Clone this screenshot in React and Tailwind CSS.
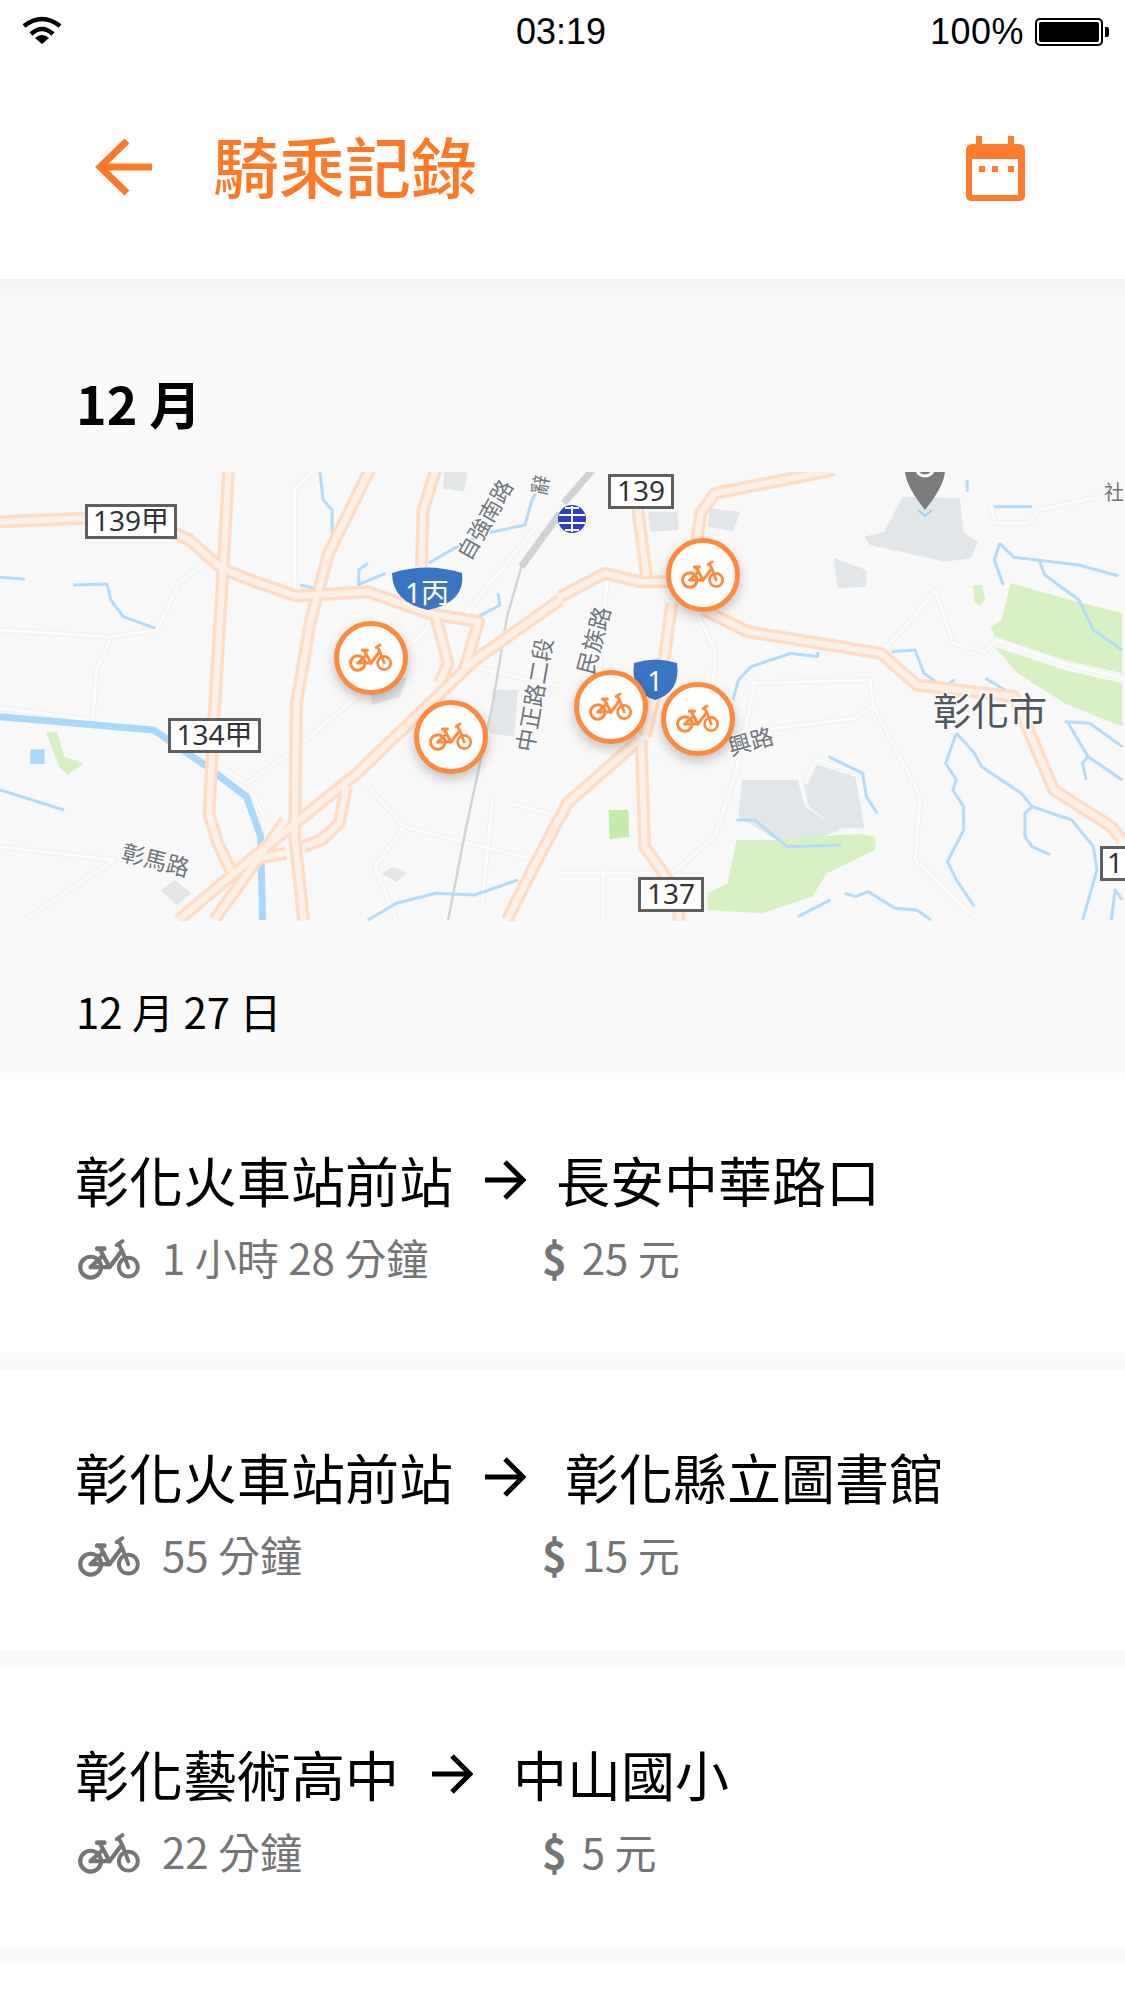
import React from "react";

const cjk = "font-['Noto_Sans_CJK_TC','Noto_Sans',sans-serif]";

function BikeIcon({ className, color }) {
  return (
    <svg className={className} viewBox="20 40 200 132" fill="none" stroke={color} strokeLinecap="round" strokeLinejoin="round">
      <circle cx="62" cy="128" r="32" strokeWidth="13" />
      <circle cx="178" cy="128" r="29" strokeWidth="12" />
      <path d="M62 128H120L158 78" strokeWidth="13" />
      <path d="M62 128L100 92" strokeWidth="13" />
      <path d="M92 76L120 128" strokeWidth="13" />
      <path d="M82 71H104" strokeWidth="14" />
      <path d="M142 60L160 48M150 60L160 80L178 128" strokeWidth="12" />
    </svg>
  );
}

function ArrowRight() {
  return (
    <svg className="w-[42px] h-[40px] shrink-0" viewBox="0 0 42 40" fill="none" stroke="#000" strokeWidth="5">
      <path d="M1 20H38" />
      <path d="M21 2L39 20L21 38" />
    </svg>
  );
}

const roadsZ2 = [
  "M0 155L240 145L490 190L530 210L620 295L700 330L830 378L1030 365L1200 430L1340 455L1300 600",
  "M640 0L625 290L600 730L585 1030L610 1120L650 1210",
  "M1220 0L1185 120L1180 290",
  "M1568 390L1330 570L1000 910L850 1040L700 1170L500 1350",
  "M1220 440L1255 580L1230 640",
  "M970 950L950 1060L900 1110L850 1130",
  "M800 1050L720 1170L600 1350",
  "M700 1170L800 1150",
  "M1568 1040L1500 1180L1420 1350",
];
const highwayZ2 = ["M1035 0L920 250L870 450L830 700L825 1100L850 1350"];
const roadsZ3 = [
  "M215 110L240 320",
  "M0 380L125 310L220 335L300 335",
  "M760 0L430 70L390 130L380 210",
  "M310 400L290 560L235 800",
  "M400 420L520 485L890 550L990 645L1260 680L1370 960L1530 1070L1560 1110",
  "M225 810L235 1130L300 1230",
  "M330 1320L330 1352",
  "M220 810L20 1000L0 1045",
];
const minorZ2 = [
  "M0 715L260 750L270 600L310 500L440 480L500 340L600 260",
  "M825 360V60L880 0",
  "M600 880L690 940L800 860L1000 680L1200 470",
  "M1320 590L1568 650",
  "M1000 910L1130 1070L1500 1170",
  "M1130 1070L1050 1190L1110 1350",
  "M1380 980L1350 1300",
  "M1430 1000L1568 1040",
  "M0 1130L320 1170L70 1350",
  "M700 960L740 1040L730 1100",
  "M1290 450L1500 170",
  "M0 480L300 500",
];
const minorZ3 = [
  "M500 600L540 640L860 630L870 710L1000 980L985 1170L1160 1352",
  "M870 710L820 745L560 780",
  "M540 640L490 900L430 1100L300 1220",
  "M890 550L950 480L1040 360L1090 520L1180 545L1210 510L1400 580L1560 625",
  "M680 940L710 870L840 910",
  "M1190 90L1210 160L1300 160L1330 120L1500 80",
  "M130 330L110 600M380 430L430 540L420 800",
  "M120 1200V1352M0 1210H300",
];
const waterZ2 = [
  "M205 345L300 342L310 390L345 440L435 475",
  "M0 322L70 328",
  "M895 0L905 90L930 120L930 190",
  "M1000 345L1080 310M1005 340V300L1030 280",
  "M1200 280L1280 230L1360 190L1470 165L1490 90L1510 50",
  "M840 345L880 355",
  "M1030 1350L1110 1300L1220 1270L1330 1275L1450 1230",
  "M1340 440L1400 405L1395 370",
  "M0 960L180 1020",
];
const waterZ3 = [
  "M1220 220L1205 270L1230 345",
  "M1220 220L1260 262L1440 285L1550 318",
  "M1330 270L1345 315L1440 390L1480 480L1560 540",
  "M480 690L495 630L530 590L640 550L715 560V545",
  "M920 545L985 540L1010 610L1060 650L1095 630",
  "M1180 625L1250 670",
  "M1400 755L1470 760L1560 830",
  "M1410 760L1465 860L1560 930",
  "M1465 860L1450 880L1460 930",
  "M1100 790L1150 850L1170 890L1280 970L1310 1010L1420 1050L1480 1130L1490 1200L1450 1350",
  "M1310 1010L1290 1030V1100L1310 1130L1360 1155",
  "M1100 790L1070 880L1100 930L1090 960L1120 1010V1080L1075 1175L1100 1230L1150 1310",
  "M745 860L840 910L850 980L880 1030",
  "M490 1050H540L630 1130L780 1125",
  "M790 1270L820 1280L855 1265L930 1315L990 1320L1030 1350",
  "M660 1340L750 1290",
  "M1530 1350L1540 1260L1560 1290",
  "M1205 110H1310",
  "M1130 30V65",
];
const greenZ3 = [
  "M1250 340L1450 400L1560 430V610L1400 570L1210 510L1195 470L1225 450Z",
  "M1205 530L1400 600L1560 640V770L1400 700L1270 610Z",
  "M1145 345H1170L1180 385L1165 408L1150 395Z",
  "M490 1110H600L700 1100L830 1092L875 1100V1140L740 1210L700 1280L560 1330L410 1320V1270L465 1240Z",
];
const grayZ3 = [
  "M950 80L1110 85L1120 190L1160 215L1140 265L1070 275L860 225L845 200L900 185Z",
  "M760 265L850 300V350L770 355Z",
  "M505 930H660L680 1010L780 1080L700 1110H600L495 1040Z",
  "M700 880L820 920L845 1075H770L690 1010L675 940Z",
  "M415 115L500 125L480 185L410 170Z",
  "M245 125H325L330 180L250 185Z",
];
const grayZ2 = [
  "M1245 0H1310L1300 65L1240 55Z",
  "M1380 660H1450L1440 800L1370 790Z",
  "M1040 650L1140 620L1120 680L1040 705Z",
  "M1070 1210L1100 1190L1140 1210L1110 1235Z",
  "M450 1260L490 1230L535 1270L495 1305Z",
];

function Lines({ items, color, width }) {
  return items.map((d, i) => (
    <path key={i} d={d} fill="none" stroke={color} strokeWidth={width} strokeLinejoin="round" vectorEffect="non-scaling-stroke" />
  ));
}

function Shield({ x, y, w, label, left }) {
  return (
    <g>
      <rect x={x + 1.5} y={y + 1.5} width={w - 3} height="32" fill="#fff" stroke="#5f5f5f" strokeWidth="3" />
      <text x={left ? x + 7 : x + w / 2} y={y + 27} textAnchor={left ? "start" : "middle"} fontSize="28" fill="#333" fontFamily="'Noto Sans','Noto Sans CJK TC',sans-serif">{label}</text>
    </g>
  );
}

function RoadLabel({ x, y, r, size = 22, fill = "#70767c", children }) {
  return (
    <text
      transform={`translate(${x} ${y}) rotate(${r})`}
      fontSize={size}
      fill={fill}
      stroke="#fafafa"
      strokeWidth="3"
      paintOrder="stroke"
      fontFamily="'Noto Sans CJK TC',sans-serif"
    >
      {children}
    </text>
  );
}

function MapArt() {
  return (
    <svg className="block w-full h-full" viewBox="0 2 1125 449" preserveAspectRatio="none">
      <rect width="1125" height="451" fill="#f8f8f8" />
      <g transform="scale(0.3571 0.3333)">
        {grayZ2.map((d, i) => <path key={i} d={d} fill="#e3e6e9" />)}
        <path d="M85 838H125V882H85Z" fill="#a9d9fb" />
        <path d="M128 785H160L180 860L235 880L190 915L165 890Z" fill="#d7f0c4" />
        <Lines items={minorZ2} color="#f2f3f3" width="6" />
        <Lines items={minorZ2} color="#fbfbfb" width="3" />
        <Lines items={waterZ2} color="#b3dcfb" width="3" />
        <Lines items={["M0 740L430 780L580 890L690 980L730 1100L735 1350"]} color="#a8d8fb" width="7" />
        <Lines items={["M1568 130L1460 290L1420 440L1380 700L1340 900L1300 1100L1255 1350"]} color="#d2d5d8" width="2.5" />
        <Lines items={["M1568 130L1460 290"]} color="#cfd3d6" width="7" />
      </g>
      <g transform="translate(560 0) scale(0.3604 0.3333)">
        {grayZ3.map((d, i) => <path key={i} d={d} fill="#e3e6e9" />)}
        {greenZ3.map((d, i) => <path key={i} d={d} fill="#d7f0c4" />)}
        <path d="M135 1020H190L192 1100L138 1108Z" fill="#c6eaa9" />
        <Lines items={minorZ3} color="#f2f3f3" width="6" />
        <Lines items={minorZ3} color="#fbfbfb" width="3" />
        <Lines items={waterZ3} color="#b3dcfb" width="3" />
        <Lines items={["M90 0L10 100"]} color="#cfd3d6" width="7" />
      </g>
      <g transform="scale(0.3571 0.3333)">
        <Lines items={[...roadsZ2, ...highwayZ2]} color="#ffdcc4" width="13" />
        <Lines items={[...roadsZ2, ...highwayZ2]} color="#fff0e6" width="6" />
      </g>
      <g transform="translate(560 0) scale(0.3604 0.3333)">
        <Lines items={roadsZ3} color="#ffdcc4" width="13" />
        <Lines items={roadsZ3} color="#fff0e6" width="6" />
      </g>

      <path d="M392 103Q427 92 462 103Q466 132 428 140Q392 132 392 103Z" fill="#3a75c4" />
      <text x="427" y="133" textAnchor="middle" fontSize="28" fill="#fff" fontFamily="'Noto Sans','Noto Sans CJK TC',sans-serif">1丙</text>
      <path d="M634 193Q655 186 677 193Q681 222 655 230Q630 222 634 193Z" fill="#3a75c4" />
      <text x="655" y="221" textAnchor="middle" fontSize="27" fill="#fff" fontFamily="'Noto Sans',sans-serif">1</text>

      <Shield x={85} y={34} w={92} label="139甲" />
      <Shield x={168} y={248} w={93} label="134甲" />
      <Shield x={608} y={4} w={66} label="139" />
      <Shield x={638} y={407} w={66} label="137" />
      <Shield x={1100} y={376} w={40} label="1" left />

      <circle cx="572" cy="49" r="14" fill="#2a3fc4" />
      <path d="M559 45H585M559 53H585M565 38H579M565 60H579M572 36V62" stroke="#fff" strokeWidth="2" />
      <path d="M905 0H945Q945 15 925 40Q905 15 905 0Z" fill="#7c7c7c" />
      <path d="M917 2Q925 10 933 2" stroke="#fff" strokeWidth="3" fill="none" />
      <path d="M918 40L925 46L932 40" stroke="#9fd2f5" strokeWidth="2" fill="none" />

      <RoadLabel x={470} y={92} r={-60} size={22}>自強南路</RoadLabel>
      <RoadLabel x={533} y={283} r={-80} size={23}>中正路二段</RoadLabel>
      <RoadLabel x={593} y={206} r={-75} size={23}>民族路</RoadLabel>
      <RoadLabel x={731} y={286} r={-16} size={23}>興路</RoadLabel>
      <RoadLabel x={120} y={390} r={14} size={23}>彰馬路</RoadLabel>
      <RoadLabel x={933} y={255} r={0} size={38} fill="#50575e">彰化市</RoadLabel>
      <RoadLabel x={546} y={26} r={-80} size={20}>辭</RoadLabel>
      <RoadLabel x={1104} y={30} r={0} size={20}>社</RoadLabel>
    </svg>
  );
}

function Pin({ left, top }) {
  return (
    <div className={`absolute ${left} ${top} w-[74px] h-[74px] rounded-full bg-white border-[5px] border-[#ff8a3d] shadow-[0_5px_12px_rgba(0,0,0,0.22)] flex items-center justify-center`}>
      <BikeIcon className="w-[46px] h-[30px]" color="#ff8a3d" />
    </div>
  );
}

const rows = [
  { from: "彰化火車站前站", to: "長安中華路口", time: "1 小時 28 分鐘", price: "25 元", gapA: "ml-[31px]", gapB: "ml-[30px]" },
  { from: "彰化火車站前站", to: "彰化縣立圖書館", time: "55 分鐘", price: "15 元", gapA: "ml-[31px]", gapB: "ml-[39px]" },
  { from: "彰化藝術高中", to: "中山國小", time: "22 分鐘", price: "5 元", gapA: "ml-[32px]", gapB: "ml-[40px]" },
];

export default function App() {
  return (
    <div className={`w-[1125px] h-[2001px] overflow-hidden bg-white ${cjk}`}>
      <div className="h-[60px] grid grid-cols-3 items-center px-[22px] pt-[4px] font-['Liberation_Sans',sans-serif] text-[36px] text-black">
        <svg className="w-[40px] h-[28px] -mt-[5px]" viewBox="0 0 40 28">
          <path d="M2 10Q20 -4 38 10" fill="none" stroke="#000" strokeWidth="4.5" />
          <path d="M9 18Q20 8 31 18" fill="none" stroke="#000" strokeWidth="4.5" />
          <path d="M13 22Q20 16 27 22L20 28Z" fill="#000" />
        </svg>
        <div className="text-center leading-none -ml-[3px]">03:19</div>
        <div className="flex items-center justify-end gap-[11px] -mr-[6px]">
          <span className="leading-none tracking-[0.5px]">100%</span>
          <div className="flex items-center gap-[2px]">
            <div className="w-[68px] h-[28px] rounded-[5px] border-2 border-black p-[2px]">
              <div className="w-full h-full bg-black rounded-[2px]" />
            </div>
            <div className="w-[4px] h-[10px] bg-black rounded-r-[2px]" />
          </div>
        </div>
      </div>

      <header className="h-[219px] flex items-center pl-[95px] pr-[99px] pb-[5px]">
        <svg className="w-[58px] h-[58px] shrink-0" viewBox="0 0 58 58" fill="none" stroke="#ff7826" strokeWidth="7">
          <path d="M57 29H6" />
          <path d="M32 3L5 29L32 55" />
        </svg>
        <h1 className="ml-[60px] -mt-[6px] text-[66px] leading-none font-medium text-[#ff7826] whitespace-nowrap">騎乘記錄</h1>
        <svg className="ml-auto mt-[3px] w-[60px] h-[66px]" viewBox="0 0 60 66">
          <path d="M10 0H16V8H42V0H48V8H53Q59 8 59 14V60Q59 65 53 65H6Q0 65 0 60V14Q0 8 6 8H10Z" fill="#ff7c2e" />
          <rect x="6" y="23" width="46" height="36" fill="#fff" />
          <rect x="13" y="30" width="6" height="6" fill="#ff7c2e" />
          <rect x="26" y="30" width="6" height="6" fill="#ff7c2e" />
          <rect x="42" y="30" width="6" height="6" fill="#ff7c2e" />
        </svg>
      </header>

      <section className="bg-[#fafafa] bg-gradient-to-b from-[#f2f2f2] to-[#fafafa] bg-[length:100%_28px] bg-no-repeat h-[193px] pl-[76px] pt-[89px]">
        <h2 className="text-[52px] leading-[70px] font-bold text-black">12 月</h2>
      </section>

      <div className="relative h-[449px] overflow-hidden">
        <MapArt />
        <Pin left="left-[334px]" top="top-[149px]" />
        <Pin left="left-[414px]" top="top-[228px]" />
        <Pin left="left-[574px]" top="top-[198px]" />
        <Pin left="left-[661px]" top="top-[210px]" />
        <Pin left="left-[666px]" top="top-[66px]" />
      </div>

      <div className="h-[152px] bg-[#fafafa] pl-[76px] pt-[62px]">
        <div className="text-[42px] leading-[56px] text-black">12 月 27 日</div>
      </div>

      {rows.map((r) => (
        <div key={r.to}>
          <div className="h-[280px] bg-white pl-[75px] pt-[74px]">
            <div className="flex items-center h-[66px] text-[54px] leading-[66px] text-black whitespace-nowrap">
              <span>{r.from}</span>
              <span className={r.gapA}><ArrowRight /></span>
              <span className={r.gapB}>{r.to}</span>
            </div>
            <div className="mt-[19px] flex items-center h-[50px] text-[42px] leading-[50px] text-[#757575] whitespace-nowrap">
              <div className="w-[467px] flex items-center">
                <BikeIcon className="w-[65px] h-[44px] ml-[2px] mt-[6px]" color="#757575" />
                <span className="ml-[20px]">{r.time}</span>
              </div>
              <span className="font-semibold mr-[15px]">$</span>
              <span>{r.price}</span>
            </div>
          </div>
          <div className="h-[17px] bg-[#fafafa]" />
        </div>
      ))}
    </div>
  );
}
